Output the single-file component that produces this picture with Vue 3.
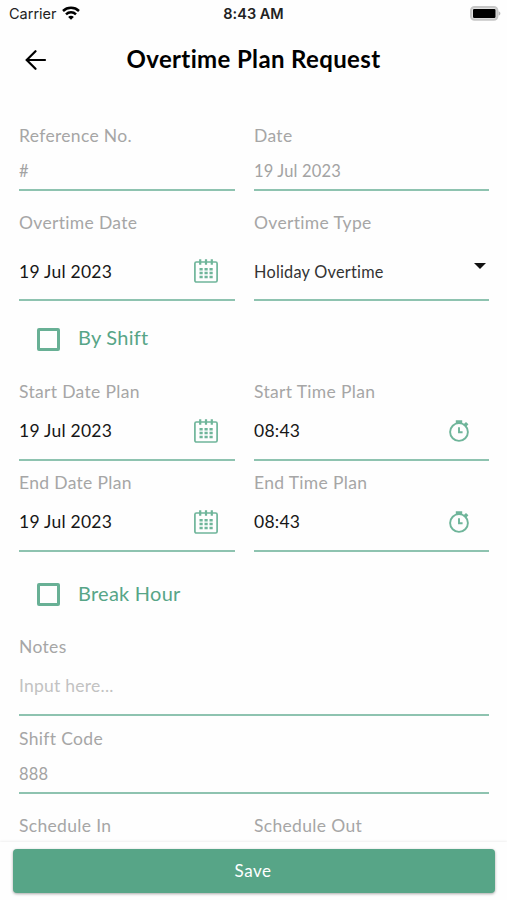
<script setup>
const topRows = [
  [
    { label: 'Reference No.', value: '#', kind: 'short', tone: 'muted' },
    { label: 'Date', value: '19 Jul 2023', kind: 'short', tone: 'muted' }
  ],
  [
    { label: 'Overtime Date', value: '19 Jul 2023', kind: 'mid', tone: 'dark', icon: 'calendar' },
    { label: 'Overtime Type', value: 'Holiday Overtime', kind: 'mid', tone: 'select', icon: 'caret' }
  ]
]
const planRows = [
  [
    { label: 'Start Date Plan', value: '19 Jul 2023', kind: 'tall', tone: 'dark', icon: 'calendar' },
    { label: 'Start Time Plan', value: '08:43', kind: 'tall', tone: 'dark', icon: 'timer' }
  ],
  [
    { label: 'End Date Plan', value: '19 Jul 2023', kind: 'tall', tone: 'dark', icon: 'calendar' },
    { label: 'End Time Plan', value: '08:43', kind: 'tall', tone: 'dark', icon: 'timer' }
  ]
]
const groups = [
  { rows: topRows, check: 'By Shift', name: 'main' },
  { rows: planRows, check: 'Break Hour', name: 'plan' }
]
</script>

<template>
  <div class="screen">
    <div class="status">
      <div class="carrier">
        <span>Carrier</span>
        <svg class="wifi" viewBox="0 0 18 14">
          <path d="M1 5C5.500 0.800 12.500 0.800 17 5M4 8.300C6.800 5.600 11.200 5.600 14 8.300" fill="none" stroke="#000" stroke-width="2.500" />
          <path d="M9 13.800L6.100 10.900C7.700 9.400 10.300 9.400 11.900 10.900Z" />
        </svg>
      </div>
      <span class="clock">8:43 AM</span>
      <div class="power">
        <svg class="battery" viewBox="0 0 31 15">
          <rect x="1" y="1" width="26.400" height="12.800" rx="3.500" fill="#e2e2e2" stroke="#c6c6c6" stroke-width="2" />
          <rect x="3" y="2.900" width="22.500" height="9" rx="1.200" />
          <path d="M28.600 5.200C31 6 31 8.700 28.600 9.500Z" fill="#b8b8b8" />
        </svg>
      </div>
    </div>

    <header class="header">
      <svg class="back" viewBox="0 0 22 20">
        <path d="M20 10H2M10.500 1.200L1.700 10L10.500 18.800" fill="none" stroke="#000" stroke-width="2.200" stroke-linecap="round" />
      </svg>
      <h1>Overtime Plan Request</h1>
    </header>

    <main class="form">
      <template v-for="g in groups" :key="g.name">
        <div v-for="(row, i) in g.rows" :key="i" class="row" :class="g.name">
          <div v-for="f in row" :key="f.label" class="field">
            <div class="label">{{ f.label }}</div>
            <div class="value" :class="[f.kind, f.tone]">
              <span>{{ f.value }}</span>
              <svg v-if="f.icon === 'calendar'" class="calendar" viewBox="0 0 24 24">
                <rect x="0.900" y="3" width="22.200" height="20" rx="1.500" fill="none" stroke="#6fb59a" stroke-width="1.700" />
                <path d="M6.200 0.300V5.700M12 0.300V5.700M17.800 0.300V5.700" stroke="#6fb59a" stroke-width="2.200" />
                <path d="M5.500 10.200H18.700M5.500 14.100H18.700M5.500 18H18.700" stroke="#6fb59a" stroke-width="2.500" stroke-dasharray="3.200 1.800" />
              </svg>
              <svg v-else-if="f.icon === 'timer'" class="timer" viewBox="0 0 20 22">
                <circle cx="10" cy="12" r="8.900" fill="none" stroke="#6fb59a" stroke-width="1.900" />
                <path d="M6.800 0.300H13.200V3.600H6.800ZM14.600 4.300L17 1.900L19.400 4.200L17.200 6.800Z" fill="#6fb59a" />
                <path d="M10 7.300V12.300H13.600" fill="none" stroke="#6fb59a" stroke-width="1.900" />
              </svg>
              <svg v-else-if="f.icon === 'caret'" class="caret" viewBox="0 0 12 6">
                <path d="M0 0H12L6 6Z" fill="#111" />
              </svg>
            </div>
          </div>
        </div>
        <div class="check" :class="g.name">
          <i class="box"></i>
          <span>{{ g.check }}</span>
        </div>
      </template>

      <div class="field">
        <div class="label">Notes</div>
        <div class="value tall placeholder"><span>Input here...</span></div>
      </div>
      <div class="field code">
        <div class="label">Shift Code</div>
        <div class="value short muted"><span>888</span></div>
      </div>
      <div class="row schedule">
        <div class="label">Schedule In</div>
        <div class="label">Schedule Out</div>
      </div>
    </main>

    <footer class="footer">
      <button class="save">Save</button>
    </footer>
  </div>
</template>

<style>
body {
  background: #fefefe;
}
</style>

<style scoped>
.screen {
  width: 507px;
  height: 900px;
  overflow: hidden;
  display: flex;
  flex-direction: column;
  background: #fefefe;
  font-family: Lato, 'Liberation Sans', sans-serif;
  font-variant-ligatures: none;
}
.status {
  flex: none;
  height: 27px;
  box-sizing: border-box;
  padding: 0 6px 0 9px;
  display: grid;
  grid-template-columns: 1fr auto 1fr;
  align-items: center;
  font-family: Inter, sans-serif;
  font-size: 14.5px;
  color: #222;
}
.carrier {
  display: flex;
  align-items: center;
  gap: 5px;
}
.wifi {
  width: 18px;
  height: 14px;
  margin-bottom: 2px;
}
.clock {
  margin-right: 3px;
  font-weight: 600;
}
.power {
  display: flex;
  justify-content: flex-end;
}
.battery {
  width: 31px;
  height: 15px;
}
.header {
  flex: none;
  height: 65px;
  display: grid;
  grid-template-columns: 48px 1fr 48px;
  align-items: center;
}
.back {
  width: 22px;
  height: 20px;
  margin-left: 25px;
}
h1 {
  margin: 0 0 2px;
  text-align: center;
  font-size: 24px;
  line-height: 30px;
  font-weight: 700;
  letter-spacing: 0.36px;
  white-space: nowrap;
  color: #000;
}
.form {
  flex: none;
  height: 750px;
  box-sizing: border-box;
  overflow: hidden;
  padding: 34px 18px 0 19px;
}
.row {
  display: grid;
  grid-template-columns: 216px 235px;
  column-gap: 19px;
}
.row.main + .row.main {
  margin-top: 22px;
}
.row.plan + .row.plan {
  margin-top: 12px;
}
.label {
  height: 20px;
  line-height: 20px;
  font-size: 17.5px;
  letter-spacing: 0.33px;
  color: #a6a6a6;
  white-space: nowrap;
}
.value {
  display: flex;
  align-items: center;
  justify-content: space-between;
  border-bottom: 2px solid #8ec3b0;
  font-size: 17.5px;
  letter-spacing: 0.25px;
  white-space: nowrap;
}
.short {
  height: 36px;
  margin-top: 7px;
}
.mid {
  height: 56px;
  margin-top: 10px;
}
.tall {
  height: 57px;
}
.muted {
  font-size: 16.5px;
  letter-spacing: 0.15px;
  color: #a3a3a3;
}
.muted span {
  margin-bottom: 1px;
}
.dark {
  color: #161616;
}
.select {
  font-size: 16.3px;
  letter-spacing: 0.24px;
  color: #333;
}
.placeholder {
  color: #c2c2c2;
}
.calendar {
  width: 24px;
  height: 24px;
  margin-right: 17px;
}
.timer {
  width: 20px;
  height: 22px;
  margin-right: 20px;
}
.caret {
  width: 12px;
  height: 6px;
  margin: 0 3px 10px 0;
}
.check {
  height: 81px;
  box-sizing: border-box;
  padding: 0 0 5px 18px;
  display: flex;
  align-items: center;
  gap: 18px;
  font-size: 20px;
  letter-spacing: 0.25px;
  color: #57a587;
}
.check span {
  margin-bottom: 4px;
}
.check.plan {
  height: 86px;
  padding-bottom: 1px;
}
.row.plan + .check.plan {
  margin-bottom: -1px;
}
.box {
  width: 23px;
  height: 23px;
  box-sizing: border-box;
  border: 3px solid #68b095;
  border-radius: 2px;
}
.code {
  margin-top: 13px;
}
.schedule {
  margin-top: 22px;
}
.footer {
  flex: none;
  height: 58px;
  box-sizing: border-box;
  padding: 7px 12px 0 13px;
  background: #fefefe;
  box-shadow: 0 -1px 2px rgba(0, 0, 0, 0.06);
}
.save {
  display: block;
  width: 100%;
  height: 44px;
  padding: 0 2px 2px 0;
  border: 0;
  border-radius: 4px;
  background: #57a587;
  color: #fff;
  font-family: inherit;
  font-size: 17px;
  letter-spacing: 0.5px;
  box-shadow: 0 1px 3px rgba(0, 0, 0, 0.35);
}
</style>
